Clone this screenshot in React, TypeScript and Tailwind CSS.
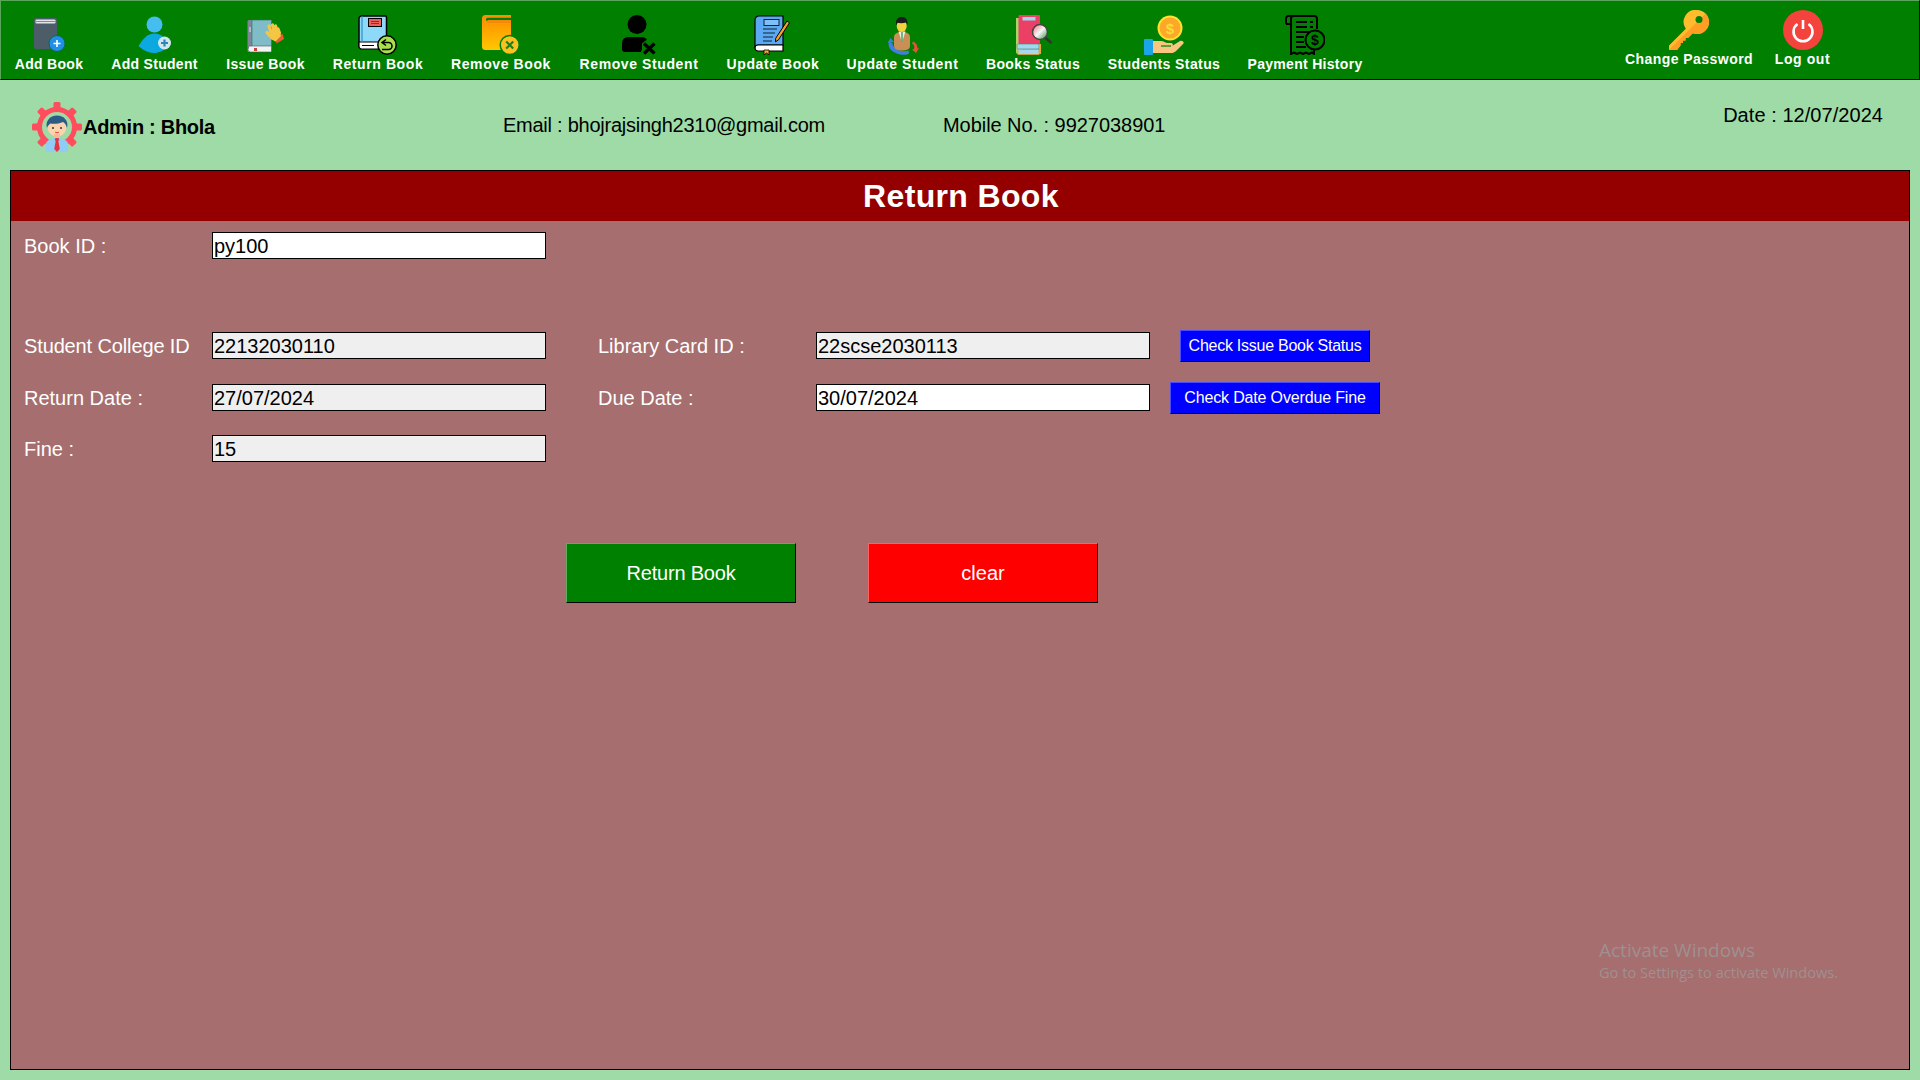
import type { ReactNode } from 'react';

const FONT = "font-['Liberation_Sans',Arial,sans-serif]";

function Icon({ children }: { children: ReactNode }) {
  return (
    <svg width="40" height="40" viewBox="0 0 40 40" className="block">
      {children}
    </svg>
  );
}

const AddBookIcon = () => (
  <Icon>
    <rect x="5" y="3" width="23" height="31" rx="2" fill="#4c5c69" />
    <rect x="6.5" y="4.5" width="20" height="4" rx="1" fill="#dfe5e8" />
    <rect x="6.5" y="6" width="20" height="1" fill="#7d8b95" />
    <circle cx="28" cy="28.5" r="8" fill="#1f8fe8" stroke="#0a6b3a" strokeWidth="1" />
    <path d="M28 25v7M24.5 28.5h7" stroke="#fff" strokeWidth="1.6" />
  </Icon>
);

const AddStudentIcon = () => (
  <Icon>
    <circle cx="19.5" cy="9.5" r="8" fill="#45bdee" />
    <path d="M3.5 31C8 24 12 18.5 19.5 18.5C27 18.5 31 24 34 31C28 36 24 38 19 38C13 38 8 35 3.5 31Z" fill="#0ca8e0" />
    <circle cx="29.5" cy="28" r="6.5" fill="#cfe6ef" />
    <path d="M29.5 24.5v7M26 28h7" stroke="#2a87ba" strokeWidth="2.2" />
  </Icon>
);

const IssueBookIcon = () => (
  <Icon>
    <rect x="1.5" y="5" width="6" height="32" rx="1.5" fill="#7d8797" />
    <rect x="6" y="5" width="19.5" height="27" fill="#7fbcc8" stroke="#2f6f60" strokeWidth=".6" />
    <path d="M3 31h22.5v6H4.500a2.500 2.500 0 0 1-2.500-2.500z" fill="#f3f3f3" stroke="#3d5a5a" strokeWidth=".6" />
    <rect x="8" y="33" width="3" height="3" fill="#c94141" />
    <path d="M4 12v5" stroke="#dfe6ea" strokeWidth="1" />
    <path d="M29 21.500l7.500-2.500 1.500 5-7.500 4.500z" fill="#ef5a3c" />
    <g stroke="#f6c544" strokeWidth="3.200" strokeLinecap="round">
      <path d="M24 21l-3-3.500" />
      <path d="M25 17l-2-6" />
      <path d="M28 16l-1.500-6" />
      <path d="M31 16l-1.500-5" />
      <path d="M33.500 18l-1.500-4" />
    </g>
    <path d="M23 15l10-1 2 7-5.500 5.500-5-2.500z" fill="#f6c544" />
    <path d="M29.500 26.500l5.500-5.500" stroke="#d99a22" strokeWidth=".8" />
  </Icon>
);

const ReturnBookIcon = () => (
  <Icon>
    <path d="M3.500 1h24a1 1 0 0 1 1 1v31H3.500A2.500 2.500 0 0 1 1 30.500V3.500A2.500 2.500 0 0 1 3.500 1z" fill="#8ed8f8" stroke="#000" strokeWidth="1.500" />
    <path d="M1 27h27.500v7H3.500A2.500 2.500 0 0 1 1 31.500z" fill="#fff" stroke="#000" strokeWidth="1.200" />
    <path d="M4 1.500v25" stroke="#3f9fcf" strokeWidth="1.500" />
    <rect x="10.500" y="3.500" width="13" height="8" fill="#e8615f" stroke="#000" />
    <path d="M13 6.500h8M13 8.500h8" stroke="#7a1f1f" strokeWidth=".8" />
    <path d="M4 30.500h12" stroke="#000" strokeWidth="1" />
    <circle cx="29" cy="30" r="9.200" fill="#a8e04c" stroke="#000" strokeWidth="1.500" />
    <path d="M28 24.500l-4 3 4 3M24.500 27.500h6a3.500 3.500 0 0 1 0 7H24" fill="none" stroke="#000" strokeWidth="1.500" />
  </Icon>
);

const RemoveBookIcon = () => (
  <Icon>
    <defs>
      <linearGradient id="rb" x1="0" y1="0" x2="0" y2="1">
        <stop offset="0" stopColor="#ff8a00" />
        <stop offset="1" stopColor="#ffc800" />
      </linearGradient>
    </defs>
    <path d="M4.500 0H30v2.800H6.500a1.600 1.600 0 0 0 0 3.200H30v29H4.500A3.500 3.500 0 0 1 1 31.500V3.500A3.500 3.500 0 0 1 4.500 0z" fill="url(#rb)" />
    <path d="M6.500 5H30v3H6.500z" fill="#f58a0a" />
    <circle cx="28.700" cy="30" r="9.500" fill="#f9c21f" stroke="#007f00" strokeWidth="1.500" />
    <path d="M25.200 26.500l7 7M32.200 26.500l-7 7" stroke="#1f7f1f" strokeWidth="2.200" />
  </Icon>
);

const RemoveStudentIcon = () => (
  <Icon>
    <circle cx="18" cy="9.500" r="9.500" fill="#000" />
    <path d="M3 31v-3a6 6 0 0 1 6-6h14a6 6 0 0 1 5 2.500l-5 4v5.500l-1 3H6a3 3 0 0 1-3-3z" fill="#000" />
    <path d="M25 28.500l10.500 10M35.500 28.500L25 38.500" stroke="#000" strokeWidth="3.500" />
  </Icon>
);

const UpdateBookIcon = () => (
  <Icon>
    <path d="M6 1h24v29H5a3 3 0 0 0-3 3V5a4 4 0 0 1 4-4z" fill="#5aa9f2" stroke="#000" strokeWidth="1.200" />
    <path d="M2 33a3 3 0 0 1 3-3h25v6H5a3 3 0 0 1-3-3z" fill="#fff" stroke="#000" strokeWidth="1.200" />
    <rect x="11" y="4.500" width="15" height="6" fill="#7cc0f6" stroke="#123" strokeWidth="1" />
    <path d="M10 14h14M10 18h12M10 22h10M10 26h9" stroke="#123" strokeWidth="1" />
    <path d="M11 35h5v5l-2.500-2-2.500 2z" fill="#f1a72c" stroke="#000" strokeWidth=".8" />
    <path d="M34 6l2.500 1.800-11 17-3 2 .2-3.500z" fill="#f4a02d" stroke="#000" strokeWidth="1" />
  </Icon>
);

const UpdateStudentIcon = () => (
  <Icon>
    <path d="M6 27c-2 6 3 10.500 11 12.500 4 .8 7 .2 9-1l-.5-3c-3 1-6 1-9 0-4-1.500-7-4-7-7.500z" fill="#3f7fe0" />
    <path d="M4.500 28l3-5 3.500 4z" fill="#3f7fe0" />
    <path d="M30 26.500c4 2 5.500 5.500 3.500 9l-2.500-1.500c1-2.500 0-4.500-2-5.500z" fill="#e8503c" />
    <path d="M36 33l-3 5-4-3.500z" fill="#e8503c" />
    <path d="M11 22c0-3 3-5 8-5s8 2 8 5v9c0 3-3 4.500-8 4.500s-8-1.500-8-4.500z" fill="#c98f55" />
    <path d="M15.500 16.500l3.500 11 3.500-11z" fill="#e8f0dc" />
    <path d="M19 17v10" stroke="#4fa06c" strokeWidth="1.500" />
    <ellipse cx="18.700" cy="11" rx="5" ry="6" fill="#f3d23f" />
    <path d="M13 10.500V7.500C13 4 15.500 2 18.700 2s5.800 2 5.800 5.500V10l-1.300-2.500c-3 .8-6.500.8-8.700.3z" fill="#1c1c1c" />
  </Icon>
);

const BooksStatusIcon = () => (
  <Icon>
    <defs>
      <linearGradient id="lens" x1="0" y1="0" x2="1" y2="1">
        <stop offset="0" stopColor="#ef6a78" />
        <stop offset=".5" stopColor="#f6f6f6" />
        <stop offset="1" stopColor="#2f8f3f" />
      </linearGradient>
    </defs>
    <path d="M3 3h6v36H5a2 2 0 0 1-2-2z" fill="#a8d46a" />
    <rect x="5.500" y="0" width="21.500" height="29" rx="1" fill="#ec3f66" />
    <rect x="9.500" y="2" width="13" height="3.500" fill="#a6d4ee" />
    <rect x="4" y="29" width="22" height="5" rx="1" fill="#9fd9f0" stroke="#5f7d6a" strokeWidth=".6" />
    <rect x="26" y="29" width="2" height="10" fill="#e6a832" />
    <rect x="5" y="34.500" width="21" height="5" fill="#a5d8ee" stroke="#e0a02f" strokeWidth=".8" />
    <path d="M32.500 23l6 5" stroke="#333" strokeWidth="2.500" />
    <circle cx="27" cy="17" r="7.500" fill="url(#lens)" stroke="#444" strokeWidth="1.500" />
  </Icon>
);

const StudentsStatusIcon = () => (
  <Icon>
    <circle cx="26" cy="13" r="12.500" fill="#ffe135" />
    <circle cx="26" cy="13" r="10.500" fill="#ffa726" />
    <text x="26" y="18.500" textAnchor="middle" fontSize="15" fontWeight="700" fill="#f7dc3e" fontFamily="Liberation Sans, sans-serif">$</text>
    <rect x="0" y="24" width="9" height="16" rx="1" fill="#1aa5e6" />
    <path d="M9 26h8c3 0 4 2 7 2h3c2 0 2.500 2 1 3l8-5c2-1 5 1 3 3l-7 7c-1.500 1.500-3 2-5 2H9z" fill="#f8c681" />
    <path d="M17 31h10" stroke="#007f00" strokeWidth="1.200" />
  </Icon>
);

const PaymentHistoryIcon = () => (
  <Icon>
    <g fill="none" stroke="#000" strokeWidth="2">
      <path d="M1 9V3.500A2.500 2.500 0 0 1 3.500 1h26A2.500 2.500 0 0 1 32 3.500V14" />
      <path d="M1 9h5V3.500A2.500 2.500 0 0 1 8.500 1" />
      <path d="M6 9v30l3-1.500 3 1.500 3-1.500 3 1.500 3-1.500 3 1.500 3-1.500 2 1.500v-5" />
      <path d="M11 7h11M25 7h3M11 12h11M25 12h3M11 17h14M11 22h8M11 27h8M11 32h10" />
      <circle cx="30" cy="25" r="9.500" />
    </g>
    <text x="30" y="30" textAnchor="middle" fontSize="14" fontWeight="700" fill="#000" fontFamily="Liberation Sans, sans-serif">$</text>
  </Icon>
);

const KeyIcon = () => (
  <Icon>
    <path d="M28 0a12 12 0 0 1 0 24c-1.500 0-3-.3-4.300-.8L19 28h-2.500v2.500H14V33h-2.500v2.500L8 40H0v-4.500l16.800-16.700A12 12 0 0 1 28 0z" fill="#ffbd2e" />
    <path d="M36.500 3.500A12 12 0 0 1 23.700 23.200L19 28h-2.500v2.500H14V33h-2.500v2.500L8 40H0z" fill="#ff9d25" />
    <circle cx="30" cy="9.500" r="3.500" fill="#007f00" />
  </Icon>
);

const PowerIcon = () => (
  <Icon>
    <circle cx="20" cy="20" r="20" fill="#f4433c" />
    <path d="M14.500 14a9.500 9.500 0 1 0 11 0" fill="none" stroke="#fff" strokeWidth="2.600" />
    <path d="M20 10v9" stroke="#fff" strokeWidth="2.600" />
  </Icon>
);

const AdminIcon = () => (
  <svg width="50" height="50" viewBox="0 0 50 50" className="block">
    <g fill="#ff4d5e">
      <rect x="21.500" y="0" width="7" height="8" rx="1.500" />
      <rect x="21.500" y="0" width="7" height="8" rx="1.500" transform="rotate(45 25 25)" />
      <rect x="21.500" y="0" width="7" height="8" rx="1.500" transform="rotate(90 25 25)" />
      <rect x="21.500" y="0" width="7" height="8" rx="1.500" transform="rotate(135 25 25)" />
      <rect x="21.500" y="0" width="7" height="8" rx="1.500" transform="rotate(225 25 25)" />
      <rect x="21.500" y="0" width="7" height="8" rx="1.500" transform="rotate(270 25 25)" />
      <rect x="21.500" y="0" width="7" height="8" rx="1.500" transform="rotate(315 25 25)" />
    </g>
    <circle cx="25" cy="25" r="17.500" fill="none" stroke="#ff4d5e" strokeWidth="5" />
    <path d="M14 50v-8c0-3 4-5 8-6h6c4 1 8 3 8 6v8z" fill="#90cdf6" />
    <path d="M23.500 36h3l.8 2-1 1 1.500 8-2.800 3-2.800-3 1.500-8-1-1z" fill="#e5343f" />
    <circle cx="25" cy="25" r="9.500" fill="#fbd3ad" />
    <rect x="22" y="32" width="6" height="4" fill="#f2bd92" />
    <path d="M15 26c-2-7 3-12.500 10-12.500S37 19 35 26c-.8-3-2-5-4-6-4 2-10 2-12.500 1.500-1.500 1-2.800 2.500-3.500 4.500z" fill="#2d5b85" />
    <circle cx="21" cy="26" r="1" fill="#333" />
    <circle cx="29" cy="26" r="1" fill="#333" />
    <path d="M23 30c1.300 1 2.700 1 4 0" fill="#e5343f" stroke="#e5343f" strokeWidth=".8" />
  </svg>
);

// widths and tracking taken per label, Tahoma-ish metrics don't scale evenly
const leftItems = [
  { label: 'Add Book', icon: <AddBookIcon />, cls: 'w-[68px] tracking-[0.3px]' },
  { label: 'Add Student', icon: <AddStudentIcon />, cls: 'w-[87px] tracking-[0.3px]' },
  { label: 'Issue Book', icon: <IssueBookIcon />, cls: 'w-[79px] tracking-[0.4px]' },
  { label: 'Return Book', icon: <ReturnBookIcon />, cls: 'w-[90px] tracking-[0.6px]' },
  { label: 'Remove Book', icon: <RemoveBookIcon />, cls: 'w-[100px] tracking-[0.6px]' },
  { label: 'Remove Student', icon: <RemoveStudentIcon />, cls: 'w-[120px] tracking-[0.6px]' },
  { label: 'Update Book', icon: <UpdateBookIcon />, cls: 'w-[92px] tracking-[0.6px]' },
  { label: 'Update Student', icon: <UpdateStudentIcon />, cls: 'w-[111px] tracking-[0.6px]' },
  { label: 'Books Status', icon: <BooksStatusIcon />, cls: 'w-[94px] tracking-[0.4px]' },
  { label: 'Students Status', icon: <StudentsStatusIcon />, cls: 'w-[112px] tracking-[0.4px]' },
  { label: 'Payment History', icon: <PaymentHistoryIcon />, cls: 'w-[114px] tracking-[0.3px]' },
];

const rightItems = [
  { label: 'Change Password', icon: <KeyIcon />, cls: 'w-[128px] tracking-[0.45px]' },
  { label: 'Log out', icon: <PowerIcon />, cls: 'w-[55px] tracking-[0.6px]' },
];

function NavItem({ label, icon, cls }: { label: string; icon: ReactNode; cls: string }) {
  return (
    <div className={`${cls} flex flex-col items-center`}>
      {icon}
      <span className="mt-[1px] text-[14px] leading-[16px] font-bold text-white whitespace-nowrap">
        {label}
      </span>
    </div>
  );
}

function Field({ value, disabled = false, inRow = false }: { value: string; disabled?: boolean; inRow?: boolean }) {
  return (
    <input
      readOnly
      value={value}
      className={`w-[334px] h-[27px] border border-black px-[1px] pt-[1px] text-[20px] leading-[25px] text-black outline-none ${
        disabled ? 'bg-[#efefef]' : 'bg-white'
      } ${inRow ? 'mb-[1px]' : ''}`}
    />
  );
}

function CheckButton({ children, cls }: { children: ReactNode; cls: string }) {
  return (
    <button
      className={`${cls} h-[32px] bg-[#0000ff] text-[16px] text-white border border-t-[#4c4cff] border-l-[#4c4cff] border-b-black border-r-black`}
    >
      {children}
    </button>
  );
}

export default function App() {
  return (
    <div className={`${FONT} relative w-[1920px] h-[1080px] overflow-hidden bg-[#9edba6] flex flex-col`}>
      <nav className="h-[80px] shrink-0 flex justify-between bg-[#007f00] border border-t-[#5aa55a] border-l-[#5aa55a] border-b-black border-r-black">
        <div className="flex items-start gap-[28px] pl-[14px] pt-[14px]">
          {leftItems.map((item) => (
            <NavItem key={item.label} {...item} />
          ))}
        </div>
        <div className="flex items-start gap-[22px] pr-[89px] pt-[9px]">
          {rightItems.map((item) => (
            <NavItem key={item.label} {...item} />
          ))}
        </div>
      </nav>

      <div className="h-[90px] shrink-0 flex items-center text-[20px] text-black">
        <div className="w-[503px] pl-[32px] pt-[4px] flex items-center">
          <AdminIcon />
          <span className="ml-[1px] font-bold tracking-[-0.28px]">Admin : Bhola</span>
        </div>
        <span className="w-[440px] mb-[1px] tracking-[-0.25px]">Email : bhojrajsingh2310@gmail.com</span>
        <span className="mb-[1px] tracking-[-0.05px]">Mobile No. : 9927038901</span>
        <span className="ml-auto mr-[37px] mb-[21px] tracking-[0.05px]">Date : 12/07/2024</span>
      </div>

      <main className="relative h-[900px] mx-[10px] shrink-0 border border-black bg-[#a66e6e]">
        <h1 className="h-[50px] pl-[2px] flex items-center justify-center bg-[#940000] text-[32px] font-bold tracking-[0.35px] text-white">
          Return Book
        </h1>

        <div className="pt-[11px] pl-[13px] text-[20px] text-white">
          <div className="flex items-center h-[27px]">
            <label className="w-[188px]">Book ID :</label>
            <Field value="py100" />
          </div>

          <div className="mt-[71px] flex items-center h-[32px]">
            <label className="w-[188px] tracking-[-0.13px]">Student College ID</label>
            <Field value="22132030110" disabled inRow />
            <label className="w-[218px] ml-[52px]">Library Card ID :</label>
            <Field value="22scse2030113" disabled inRow />
            <div className="w-[210px] ml-[20px] flex justify-center">
              <CheckButton cls="w-[190px] tracking-[-0.26px]">Check Issue Book Status</CheckButton>
            </div>
          </div>

          <div className="mt-[20px] flex items-center h-[32px]">
            <label className="w-[188px]">Return Date :</label>
            <Field value="27/07/2024" disabled inRow />
            <label className="w-[218px] ml-[52px]">Due Date :</label>
            <Field value="30/07/2024" inRow />
            <div className="w-[210px] ml-[20px] flex justify-center">
              <CheckButton cls="w-[210px] tracking-[-0.16px]">Check Date Overdue Fine</CheckButton>
            </div>
          </div>

          <div className="mt-[21px] flex items-center h-[27px]">
            <label className="w-[188px]">Fine :</label>
            <Field value="15" disabled />
          </div>

          <div className="mt-[81px] ml-[542px] flex gap-[72px]">
            <button className="w-[230px] h-[60px] bg-[#008000] tracking-[-0.2px] text-white border border-t-[#5fae5f] border-l-[#5fae5f] border-b-black border-r-black">
              Return Book
            </button>
            <button className="w-[230px] h-[60px] bg-[#ff0000] text-white border border-t-[#ff6060] border-l-[#ff6060] border-b-black border-r-black">
              clear
            </button>
          </div>
        </div>

        {/* windows watermark sits on top of the panel */}
        <div className="absolute left-[1588px] top-[766px] font-['Open_Sans',sans-serif] text-[#a09090]">
          <p className="text-[19px] leading-[26px]">Activate Windows</p>
          <p className="text-[14.6px] leading-[18px]">Go to Settings to activate Windows.</p>
        </div>
      </main>
    </div>
  );
}
